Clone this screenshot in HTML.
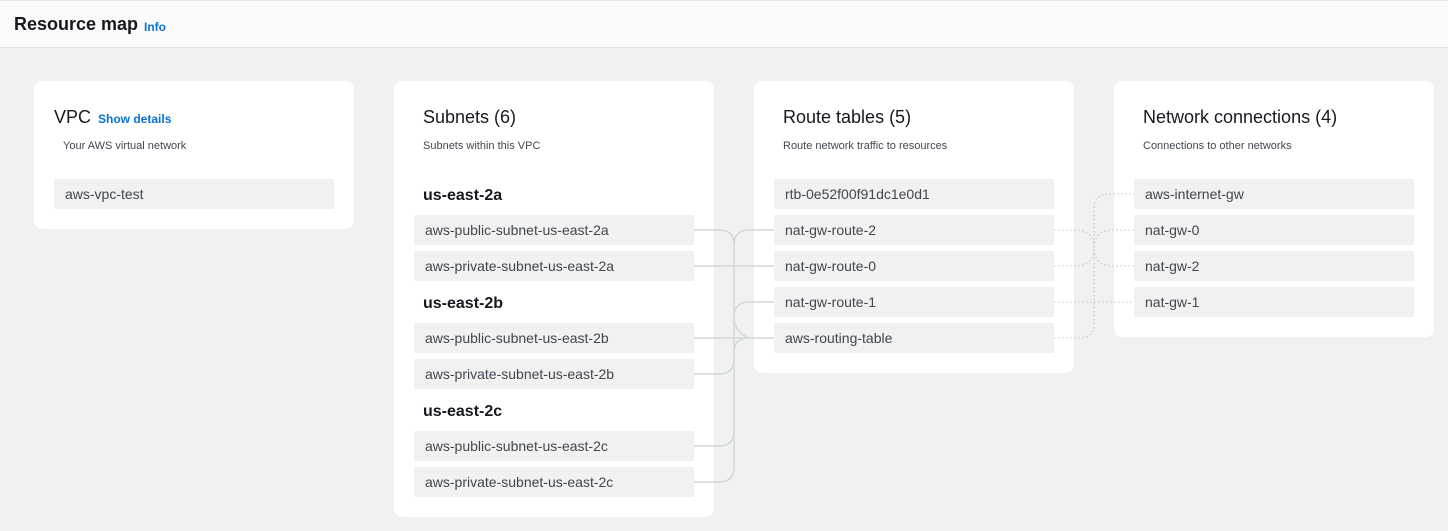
<!DOCTYPE html>
<html><head><meta charset="utf-8"><style>
*{margin:0;padding:0;box-sizing:border-box}
body{width:1448px;height:531px;background:#f0f1f0;font-family:"Liberation Sans",sans-serif;position:relative;overflow:hidden;color:#16191f}
.hdr{position:absolute;left:0;top:0;width:1448px;height:48px;background:#fafafa;border-top:1px solid #e5e7e7;border-bottom:1px solid #e3e5e5}
.hdr h1{position:absolute;left:14px;top:13px;font-size:18px;font-weight:bold;color:#16191f}
.hdr a{position:absolute;left:144px;top:19px;font-size:12px;font-weight:bold;color:#0972d3}
.card{position:absolute;background:#fff;border-radius:8px;top:81px;width:320px}
.t{position:absolute;left:29px;top:26px;font-size:18px;color:#16191f}
.s{position:absolute;left:29px;top:59px;font-size:11px;color:#414750}
.it{position:absolute;left:20px;width:280px;height:30px;background:#f0f1f0;border-radius:2px;font-size:14px;color:#414750;line-height:30px;padding-left:11px}
.az{position:absolute;left:29px;font-size:16px;font-weight:bold;color:#16191f}
svg{position:absolute;left:0;top:0}
</style></head><body>
<div class="hdr"><h1>Resource map</h1><a>Info</a></div>

<div class="card" style="left:34px;height:148px">
<div class="t" style="left:20px">VPC <span style="font-size:12px;font-weight:bold;color:#0972d3;margin-left:2px">Show details</span></div>
<div class="s">Your AWS virtual network</div>
<div class="it" style="top:98px">aws-vpc-test</div>
</div>

<div class="card" style="left:394px;height:436px">
<div class="t">Subnets (6)</div>
<div class="s">Subnets within this VPC</div>
<div class="az" style="top:106px">us-east-2a</div>
<div class="it" style="top:134px">aws-public-subnet-us-east-2a</div>
<div class="it" style="top:170px">aws-private-subnet-us-east-2a</div>
<div class="az" style="top:214px">us-east-2b</div>
<div class="it" style="top:242px">aws-public-subnet-us-east-2b</div>
<div class="it" style="top:278px">aws-private-subnet-us-east-2b</div>
<div class="az" style="top:322px">us-east-2c</div>
<div class="it" style="top:350px">aws-public-subnet-us-east-2c</div>
<div class="it" style="top:386px">aws-private-subnet-us-east-2c</div>
</div>

<div class="card" style="left:754px;height:292px">
<div class="t">Route tables (5)</div>
<div class="s">Route network traffic to resources</div>
<div class="it" style="top:98px">rtb-0e52f00f91dc1e0d1</div>
<div class="it" style="top:134px">nat-gw-route-2</div>
<div class="it" style="top:170px">nat-gw-route-0</div>
<div class="it" style="top:206px">nat-gw-route-1</div>
<div class="it" style="top:242px">aws-routing-table</div>
</div>

<div class="card" style="left:1114px;height:256px">
<div class="t">Network connections (4)</div>
<div class="s">Connections to other networks</div>
<div class="it" style="top:98px">aws-internet-gw</div>
<div class="it" style="top:134px">nat-gw-0</div>
<div class="it" style="top:170px">nat-gw-2</div>
<div class="it" style="top:206px">nat-gw-1</div>
</div>

<svg width="1448" height="531" fill="none">
<g stroke="#d1d9d6" stroke-width="1.5">
<path d="M694 230 H719 Q734 230 734 245 V467 Q734 482 719 482 H694"/>
<path d="M694 266 H774"/>
<path d="M694 338 H774"/>
<path d="M694 374 H719 Q734 374 734 359"/>
<path d="M694 446 H719 Q734 446 734 431"/>
<path d="M774 230 H749 Q734 230 734 245"/>
<path d="M774 302 H749 Q734 302 734 317 Q734 332 749 338"/>
<path d="M734 353 Q734 338 749 338"/>
</g>
<g stroke="#c8cdcd" stroke-width="1.2" stroke-dasharray="1.5 2.5">
<path d="M1054 338 H1079 Q1094 338 1094 323 V209 Q1094 194 1109 194 H1134"/>
<path d="M1054 230 H1074 Q1094 230 1094 248 Q1094 266 1114 266 H1134"/>
<path d="M1054 266 H1074 Q1094 266 1094 248 Q1094 230 1114 230 H1134"/>
<path d="M1054 302 H1134"/>
</g>
</svg>
</body></html>
